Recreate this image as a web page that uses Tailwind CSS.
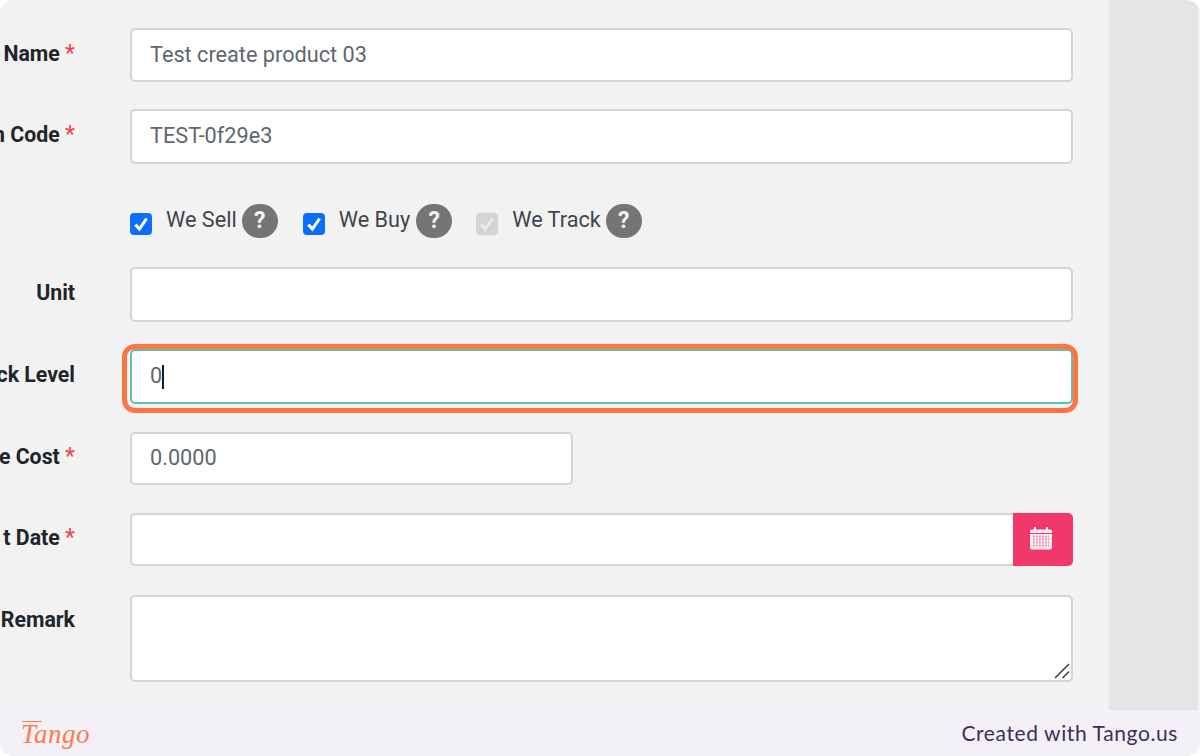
<!DOCTYPE html>
<html>
<head>
<meta charset="utf-8">
<script src="https://cdn.jsdelivr.net/npm/@tailwindcss/browser@4"></script>
</head>
<body class="bg-white">
<div class="w-[1200px] h-[756px] overflow-hidden flex flex-col font-['Roboto',sans-serif] rounded-[14px] bg-[#f3f1f7]">
  <div class="h-[710px] flex shrink-0">
    <main class="w-[1109px] bg-[#f2f2f2] pt-[28px] pr-[36px] flex flex-col rounded-tl-[10px]">
      <div class="flex h-[54px] mb-[27px]">
        <label class="w-[75px] mr-[55px] pt-[13px] flex justify-end whitespace-pre text-[21.3px] leading-[26px] font-bold text-[#212529]">Name <span class="text-[#ef4444] font-normal text-[23px]">*</span></label>
        <div class="flex-1 bg-white border-2 border-[#d4d4d4] rounded-[5px] pl-[18px] flex items-center text-[21.7px] text-[#5f666d]">Test create product 03</div>
      </div>
      <div class="flex h-[55px] mb-[40px]">
        <label class="w-[75px] mr-[55px] pt-[13px] flex justify-end whitespace-pre text-[21.3px] leading-[26px] font-bold text-[#212529]">n Code <span class="text-[#ef4444] font-normal text-[23px]">*</span></label>
        <div class="flex-1 bg-white border-2 border-[#d4d4d4] rounded-[5px] pl-[18px] flex items-center text-[21.7px] text-[#5f666d]">TEST-0f29e3</div>
      </div>
      <div class="flex h-[34px] mb-[29px] pl-[130px] items-center text-[21.7px] text-[#3f454b]">
        <span class="w-[22px] h-[22px] rounded-[4px] bg-[#0d6efd] flex items-center justify-center mt-[6px] mr-[14px]">
          <svg viewBox="0 0 16 16" class="w-[20px] h-[20px]"><path d="M3.5 8.5 L6.7 12 L12.5 3.6" fill="none" stroke="#fff" stroke-width="2.4"/></svg>
        </span>
        <span class="mb-[2px]">We Sell</span>
        <span class="w-[36px] h-[34px] ml-[5px] rounded-full bg-[#757575] text-[#f4f4f4] font-bold text-[23px] flex items-center justify-center">?</span>
        <span class="w-[22px] h-[22px] rounded-[4px] bg-[#0d6efd] flex items-center justify-center mt-[6px] ml-[25px] mr-[14px]">
          <svg viewBox="0 0 16 16" class="w-[20px] h-[20px]"><path d="M3.5 8.5 L6.7 12 L12.5 3.6" fill="none" stroke="#fff" stroke-width="2.4"/></svg>
        </span>
        <span class="mb-[2px]">We Buy</span>
        <span class="w-[36px] h-[34px] ml-[6px] rounded-full bg-[#757575] text-[#f4f4f4] font-bold text-[23px] flex items-center justify-center">?</span>
        <span class="w-[22px] h-[22px] rounded-[4px] bg-[#d4d4d4] flex items-center justify-center mt-[6px] ml-[24px] mr-[14px]">
          <svg viewBox="0 0 16 16" class="w-[20px] h-[20px]"><path d="M3.5 8.5 L6.7 12 L12.5 3.6" fill="none" stroke="#ececec" stroke-width="2.4"/></svg>
        </span>
        <span class="mb-[2px]">We Track</span>
        <span class="w-[36px] h-[34px] ml-[5px] rounded-full bg-[#757575] text-[#f4f4f4] font-bold text-[23px] flex items-center justify-center">?</span>
      </div>
      <div class="flex h-[55px] mb-[27px]">
        <label class="w-[75px] mr-[55px] pt-[13px] flex justify-end whitespace-pre text-[21.3px] leading-[26px] font-bold text-[#212529]">Unit</label>
        <div class="flex-1 bg-white border-2 border-[#d4d4d4] rounded-[5px]"></div>
      </div>
      <div class="flex h-[55px] mb-[28px]">
        <label class="w-[75px] mr-[55px] pt-[13px] flex justify-end whitespace-pre text-[21.3px] leading-[26px] font-bold text-[#212529]">ck Level</label>
        <div class="relative flex-1 bg-white border-2 border-[#5fc3a1] rounded-[5px] pl-[18px] flex items-center text-[21.7px] text-[#5f666d]">
          <span>0</span><span class="w-[2px] h-[24px] bg-[#1c1c1c]"></span>
          <div class="absolute -left-[10px] -top-[7px] -right-[7px] -bottom-[11px] border-[5px] border-[#ff7442] rounded-[13px]"></div>
        </div>
      </div>
      <div class="flex h-[53px] mb-[28px]">
        <label class="w-[75px] mr-[55px] pt-[12px] flex justify-end whitespace-pre text-[21.3px] leading-[26px] font-bold text-[#212529]">e Cost <span class="text-[#ef4444] font-normal text-[23px]">*</span></label>
        <div class="w-[443px] bg-white border-2 border-[#d4d4d4] rounded-[5px] pl-[18px] flex items-center text-[21.7px] text-[#5f666d]">0.0000</div>
      </div>
      <div class="flex h-[53px] mb-[29px]">
        <label class="w-[75px] mr-[55px] pt-[12px] flex justify-end whitespace-pre text-[21.3px] leading-[26px] font-bold text-[#212529]">t Date <span class="text-[#ef4444] font-normal text-[23px]">*</span></label>
        <div class="flex-1 flex">
          <div class="flex-1 bg-white border-2 border-r-0 border-[#d4d4d4] rounded-l-[5px]"></div>
          <div class="w-[60px] bg-[#f0386b] rounded-r-[5px] pr-[4px] pb-[3px] flex items-center justify-center">
            <svg viewBox="0 0 24 24" class="w-[24px] h-[26px]">
              <path d="M1 5.5 a2 2 0 0 1 2-2 h18 a2 2 0 0 1 2 2 v16 a2 2 0 0 1-2 2 h-18 a2 2 0 0 1-2-2z" fill="#fff" fill-opacity="0.92"/>
              <rect x="5" y="1" width="2" height="4" fill="#fff"/><rect x="17" y="1" width="2" height="4" fill="#fff"/>
              <path d="M1 7.5h22" stroke="#f0386b" stroke-width="1"/>
              <path d="M4 10.5h16M4 13.5h16M4 16.5h16M4 19.5h16" stroke="#f08aa8" stroke-width="1.8" stroke-dasharray="1.8 1.2"/>
            </svg>
          </div>
        </div>
      </div>
      <div class="flex h-[87px]">
        <label class="w-[75px] mr-[55px] pt-[12px] flex justify-end whitespace-pre text-[21.3px] leading-[26px] font-bold text-[#212529]">Remark</label>
        <div class="relative flex-1 bg-white border-2 border-[#d4d4d4] rounded-[5px]">
          <svg viewBox="0 0 16 16" class="absolute right-[1px] bottom-[1px] w-[16px] h-[16px]"><path d="M1 15 L15 1 M8.5 15 L15 8.5" stroke="#444" stroke-width="1.6"/></svg>
        </div>
      </div>
    </main>
    <aside class="flex-1 bg-[#e5e5e5] mr-[2px]"></aside>
  </div>
  <footer class="flex-1 flex items-center justify-between pl-[21px] pr-[22px]">
    <span class="relative font-['Liberation_Serif',serif] italic text-[27px] leading-none text-[#ff7a4d] tracking-[0.5px] mt-[3px]">Tango<span class="absolute left-[1px] top-[0px] w-[20px] h-[1px] bg-[#ff7a4d]"></span></span>
    <span class="font-['Lato',sans-serif] text-[21px] tracking-[0.6px] text-[#3f2f57]">Created with Tango.us</span>
  </footer>
</div>
</body>
</html>
